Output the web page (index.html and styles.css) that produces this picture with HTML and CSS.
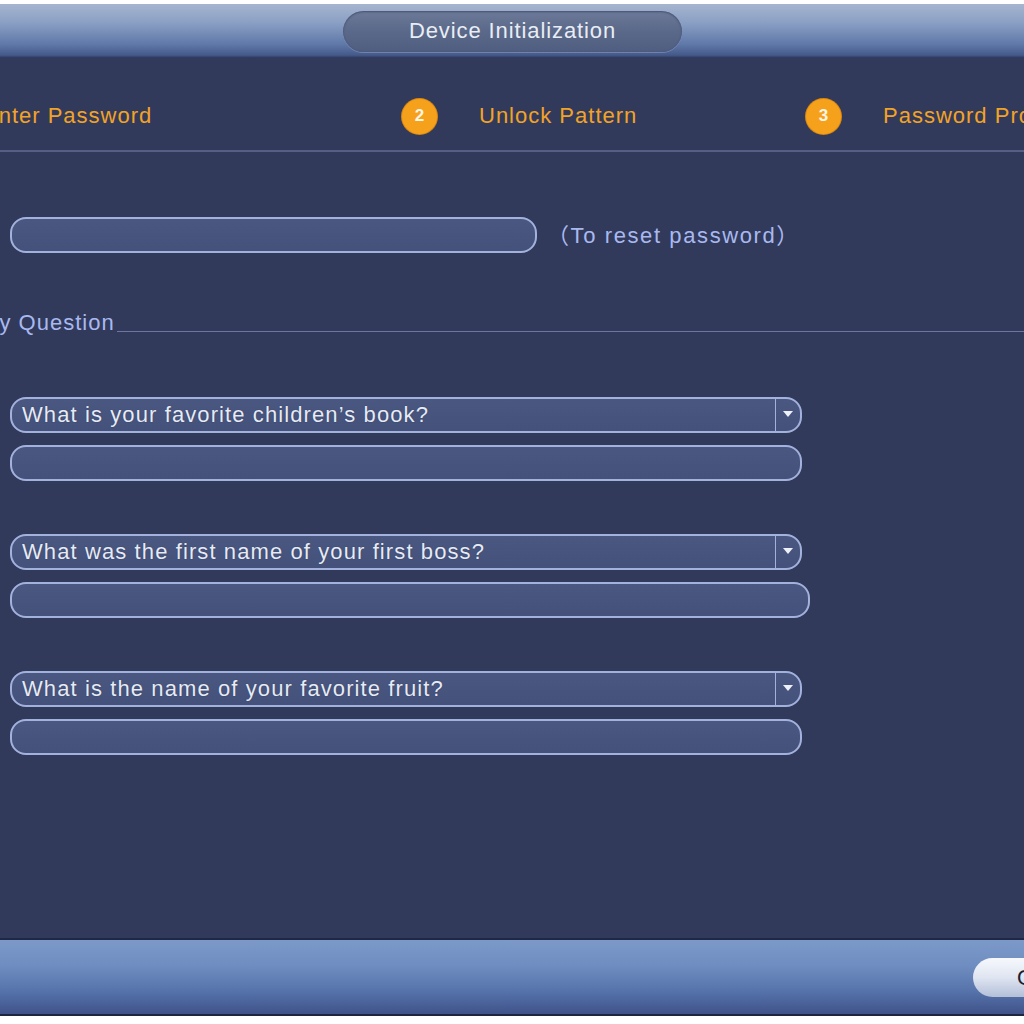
FILE: index.html
```html
<!DOCTYPE html>
<html>
<head>
<meta charset="utf-8">
<link rel="stylesheet" href="styles.css">
</head>
<body>
<div class="frame">
  <div class="header">
    <div class="title">Device Initialization</div>
  </div>
  <div class="steps">
    <div class="step first"><span class="step-text">Enter Password</span></div>
    <div class="step"><span class="num">2</span><span class="step-text">Unlock Pattern</span></div>
    <div class="step"><span class="num">3</span><span class="step-text">Password Protection</span></div>
  </div>
  <div class="content">
    <div class="email-row">
      <div class="field email"></div>
      <span class="hint">（To reset password）</span>
    </div>
    <div class="section">
      <span class="section-title">Security Question</span>
      <span class="section-line"></span>
    </div>
    <div class="qa">
      <div class="field select"><span class="sel-text">What is your favorite children’s book?</span><span class="sel-btn"><span class="tri"></span></span></div>
      <div class="field answer"></div>
    </div>
    <div class="qa">
      <div class="field select"><span class="sel-text">What was the first name of your first boss?</span><span class="sel-btn"><span class="tri"></span></span></div>
      <div class="field answer wide"></div>
    </div>
    <div class="qa">
      <div class="field select"><span class="sel-text">What is the name of your favorite fruit?</span><span class="sel-btn"><span class="tri"></span></span></div>
      <div class="field answer"></div>
    </div>
  </div>
  <div class="footer">
    <div class="btn">OK</div>
  </div>
</div>
</body>
</html>
```
FILE: styles.css
```css
html, body {
  margin: 0;
  padding: 0;
  background: #ffffff;
}
body {
  font-family: "Liberation Sans", Arial, "Noto Sans CJK SC", sans-serif;
  width: 1024px;
  height: 1024px;
  overflow: hidden;
}
.frame {
  margin-top: 4px;
  height: 1012px;
  background: #323a5b;
  display: flex;
  flex-direction: column;
  overflow: hidden;
}
.header {
  height: 54px;
  flex: none;
  background: linear-gradient(#a6b5cf 0%, #8a9fc4 35%, #5f78a8 75%, #44598a 95%, #2b3558 100%);
  display: flex;
  justify-content: center;
  align-items: flex-start;
  padding-left: 1px;
  box-sizing: border-box;
}
.title {
  margin-top: 7px;
  width: 339px;
  height: 41px;
  border-radius: 21px;
  background: linear-gradient(#6d7a99, #5a6889 50%, #4f5d80);
  box-shadow: inset 0 1px 2px rgba(30,40,70,0.5), 0 1px 0 rgba(200,210,235,0.3);
  color: #e9edf5;
  font-size: 22px;
  letter-spacing: 0.9px;
  display: flex;
  align-items: center;
  justify-content: center;
  padding-bottom: 1px;
  box-sizing: border-box;
}
.steps {
  height: 94px;
  flex: none;
  border-bottom: 2px solid #566087;
  box-sizing: border-box;
  display: flex;
  align-items: center;
  padding-top: 24px;
  white-space: nowrap;
}
.step {
  display: flex;
  align-items: center;
  width: 404px;
  flex: none;
}
.step.first {
  width: 419px;
  margin-left: -17px;
}
.num {
  width: 35px;
  height: 35px;
  border-radius: 50%;
  background: #f6a11c;
  box-shadow: 0 0 0 1px #d8870e;
  color: #fff6e6;
  font-size: 17px;
  font-weight: bold;
  display: flex;
  align-items: center;
  justify-content: center;
  margin-right: 42px;
  flex: none;
}
.step-text {
  color: #f2a327;
  font-size: 22px;
  letter-spacing: 1px;
}
.content {
  flex: 1;
  padding-left: 10px;
}
.field {
  height: 36px;
  box-sizing: border-box;
  border: 2px solid #a3b1dd;
  border-radius: 16px;
  background: linear-gradient(#4a5881, #44517a);
}
.email-row {
  margin-top: 65px;
  display: flex;
  align-items: center;
}
.email {
  width: 527px;
}
.hint {
  margin-left: 10px;
  color: #a9b9f0;
  font-size: 22px;
  letter-spacing: 1.6px;
  margin-top: -4px;
}
.section {
  margin-top: 53px;
  margin-left: -86px;
  display: flex;
  align-items: flex-end;
  height: 30px;
}
.section-title {
  color: #a9b9f0;
  font-size: 22px;
  letter-spacing: 1px;
  line-height: 26px;
  white-space: nowrap;
}
.section-line {
  flex: 1;
  height: 1px;
  background: #6c77a3;
  margin-bottom: 4px;
  margin-left: 2px;
}
.qa {
  display: flex;
  flex-direction: column;
  gap: 12px;
}
.qa + .qa {
  margin-top: 53px;
}
.section + .qa {
  margin-top: 61px;
}
.select {
  width: 792px;
  display: flex;
  align-items: center;
  padding-left: 10px;
}
.sel-text {
  flex: 1;
  color: #e7ebf5;
  font-size: 22px;
  letter-spacing: 1.1px;
  white-space: nowrap;
  text-shadow: 0 0 1px rgba(20,30,60,0.6);
}
.sel-btn {
  width: 24px;
  height: 32px;
  border-left: 1px solid #a3b1dd;
  display: flex;
  align-items: center;
  justify-content: center;
}
.tri {
  width: 0;
  height: 0;
  border-left: 5px solid transparent;
  border-right: 5px solid transparent;
  border-top: 6px solid #eef1f8;
  margin-top: -2px;
}
.answer {
  width: 792px;
}
.answer.wide {
  width: 800px;
}
.footer {
  flex: none;
  height: 78px;
  box-sizing: border-box;
  border-top: 2px solid #1f2846;
  border-bottom: 2px solid #1d2640;
  background: linear-gradient(#7c99c9 0%, #6f8dc0 35%, #5572aa 70%, #3f5389 100%);
  display: flex;
  justify-content: flex-end;
  align-items: flex-start;
}
.btn {
  margin-top: 18px;
  margin-right: -50px;
  width: 101px;
  height: 39px;
  border-radius: 20px;
  background: linear-gradient(#f6f8fc, #dfe5f1 50%, #b3bfd9);
  color: #1c2030;
  font-size: 22px;
  display: flex;
  align-items: center;
  padding-left: 44px;
  box-sizing: border-box;
}
```
